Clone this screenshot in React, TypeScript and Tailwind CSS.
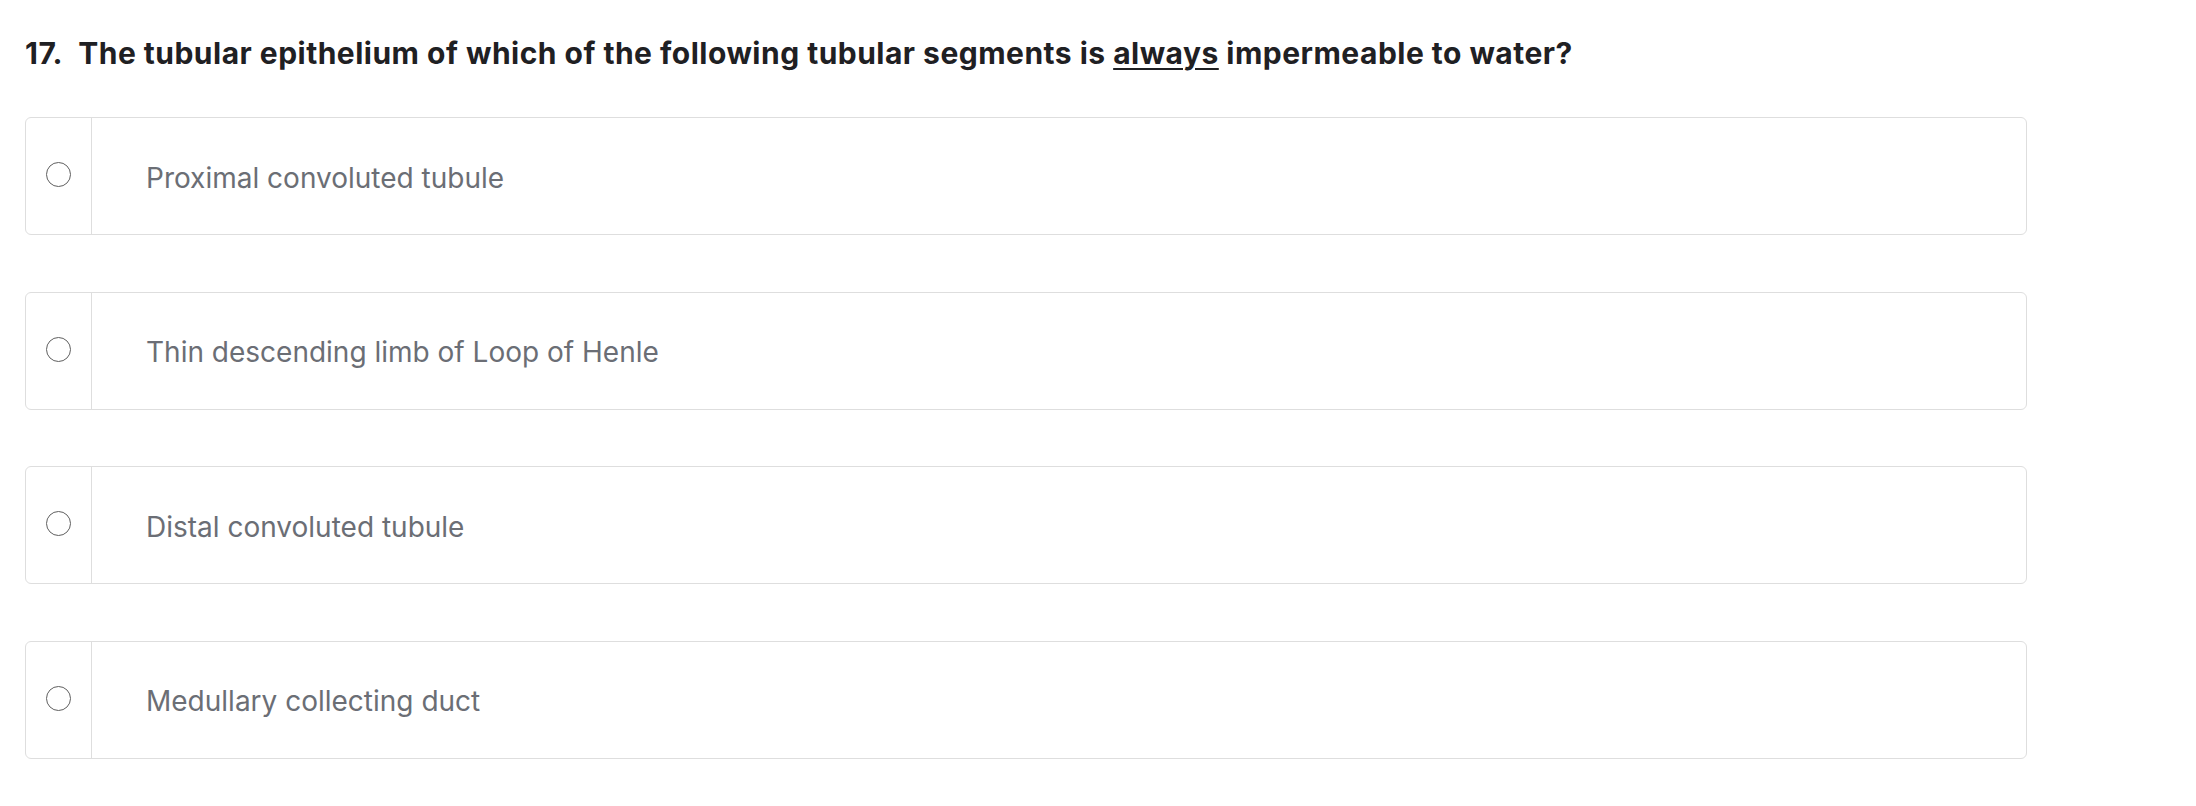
const options = [
  'Proximal convoluted tubule',
  'Thin descending limb of Loop of Henle',
  'Distal convoluted tubule',
  'Medullary collecting duct',
]

export default function App() {
  return (
    <div className="min-h-screen bg-white px-[25px] pt-[35px] font-['Inter',sans-serif]">
      <h2 className="text-[30px] leading-[36px] font-bold tracking-[0.016em] text-[#1f2023]">
        17.&nbsp; The tubular epithelium of which of the following tubular segments is{' '}
        <span className="underline underline-offset-[4px] decoration-[2px]">always</span> impermeable to water?
      </h2>
      <div className="mt-[46px] flex w-[2002px] flex-col gap-[56.5px]">
        {options.map((label) => (
          <OptionRow key={label} label={label} />
        ))}
      </div>
    </div>
  )
}

function OptionRow({ label }: { label: string }) {
  return (
    <label className="flex h-[118px] cursor-pointer overflow-hidden rounded-[6px] border-[1.5px] border-[#dedede] bg-white">
      <div className="flex w-[66px] shrink-0 items-center justify-center border-r-[1.5px] border-[#dedede]">
        <span className="mt-[-3px] block h-[25px] w-[25px] rounded-full border-[1.5px] border-[#5f5f5f]" />
      </div>
      <div className="flex items-center pl-[54px] pt-[3px] text-[28px] text-[#6b6e75]">{label}</div>
    </label>
  )
}
